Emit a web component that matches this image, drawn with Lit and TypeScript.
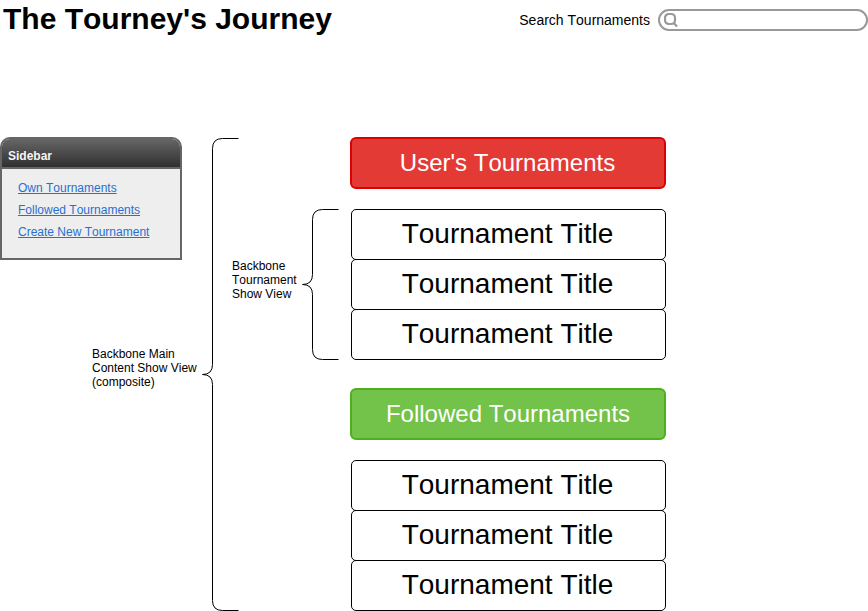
import { LitElement, html, css } from "lit";
import { customElement, property } from "lit/decorators.js";

@customElement("curly-bracket")
class CurlyBracket extends LitElement {
  @property({ type: Number }) span = 150;

  static styles = css`
    :host { display: block; flex: none; }
    svg { display: block; overflow: visible; }
    path { fill: none; stroke: #000; stroke-width: 1; }
  `;

  render() {
    const h = this.span;
    const mid = h / 2;
    const d = `M36.5 .5H20.5Q10.5 .5 10.5 10.5V${mid - 9.5}Q10.5 ${mid + 0.5} .5 ${mid + 0.5}Q10.5 ${mid + 0.5} 10.5 ${mid + 10.5}V${h - 9.5}Q10.5 ${h + 0.5} 20.5 ${h + 0.5}H36.5`;
    return html`<svg width="37" height=${h + 1}><path d=${d}></path></svg>`;
  }
}

@customElement("side-bar")
class SideBar extends LitElement {
  static styles = css`
    :host { display: block; width: 182px; height: 123px; box-sizing: border-box;
      border: 2px solid #666; border-radius: 10px 10px 0 0; background: #eee; overflow: hidden; }
    .head { height: 28px; box-sizing: border-box; padding: 10px 6px 0;
      background: linear-gradient(#666, #303030); color: #f6f6f6; font-weight: bold; line-height: 14px; }
    .links { display: flex; flex-direction: column; align-items: flex-start; gap: 8px;
      padding: 12px 16px; border-top: 2px solid #666; }
    a { color: #2a6fd0; line-height: 14px; text-decoration: underline; }
  `;

  render() {
    return html`
      <div class="head">Sidebar</div>
      <div class="links">
        ${["Own Tournaments", "Followed Tournaments", "Create New Tournament"].map(
          (t) => html`<a href="#">${t}</a>`
        )}
      </div>`;
  }
}

@customElement("app-root")
class AppRoot extends LitElement {
  static styles = css`
    :host { display: block; width: 868px; height: 611px; overflow: hidden; background: #fff;
      color: #000; font: 12px/14px "Liberation Sans", Arial, sans-serif; font-kerning: none; }
    header { display: flex; justify-content: space-between; height: 137px; }
    h1 { margin: 1px 0 0 3px; font-size: 30px; line-height: 35px; font-weight: bold; white-space: nowrap; }
    .search { display: flex; align-items: flex-start; font-size: 14px; line-height: 16px; padding-top: 9px; }
    .search span { margin: 3px 8px 0 0; }
    .field { width: 210px; height: 22px; box-sizing: border-box; border: 2px solid #999; border-radius: 11px; }
    .field svg { display: block; margin: 2px 0 0 4px; }
    .page { display: flex; align-items: flex-start; }
    .left { width: 202px; flex: none; }
    .note { white-space: nowrap; }
    .composite { margin: 87px 0 0 92px; }
    .outer { margin-top: 1px; }
    .single { width: 70px; margin: 122px 0 0 -7px; flex: none; }
    .inner { margin-top: 72px; }
    .content { width: 316px; margin-left: 11px; flex: none; }
    h2 { margin: 0; height: 52px; box-sizing: border-box; border: 2px solid; border-radius: 6px;
      font-size: 24px; line-height: 47px; font-weight: normal; text-align: center; color: #fff; }
    .red { background: #e43a35; border-color: #d00; padding-right: 1px; }
    .green { background: #73c24a; border-color: #4fb01f; }
    .list { margin: 20px 0 28px 1px; }
    .row { height: 51px; box-sizing: border-box; border: 1px solid #000; border-radius: 5px;
      padding-right: 2px; font-size: 28px; line-height: 48px; text-align: center; }
    .row + .row { margin-top: -1px; }
  `;

  private section(title: string, tone: string) {
    return html`<h2 class=${tone}>${title}</h2>
      <div class="list">${[0, 1, 2].map(() => html`<div class="row">Tournament Title</div>`)}</div>`;
  }

  render() {
    return html`
      <header>
        <h1>The Tourney's Journey</h1>
        <div class="search">
          <span>Search Tournaments</span>
          <div class="field">
            <svg width="15" height="15" fill="none" stroke="#999" stroke-width="2.2">
              <rect x="1" y="1" width="10" height="10" rx="3.8"></rect>
              <path d="M9.3 9.5L13 13.6"></path>
            </svg>
          </div>
        </div>
      </header>
      <div class="page">
        <div class="left">
          <side-bar></side-bar>
          <div class="note composite">Backbone Main<br />Content Show View<br />(composite)</div>
        </div>
        <curly-bracket class="outer" .span=${472}></curly-bracket>
        <div class="note single">Backbone<br />Tournament<br />Show View</div>
        <curly-bracket class="inner" .span=${150}></curly-bracket>
        <main class="content">
          ${this.section("User's Tournaments", "red")}
          ${this.section("Followed Tournaments", "green")}
        </main>
      </div>`;
  }
}
